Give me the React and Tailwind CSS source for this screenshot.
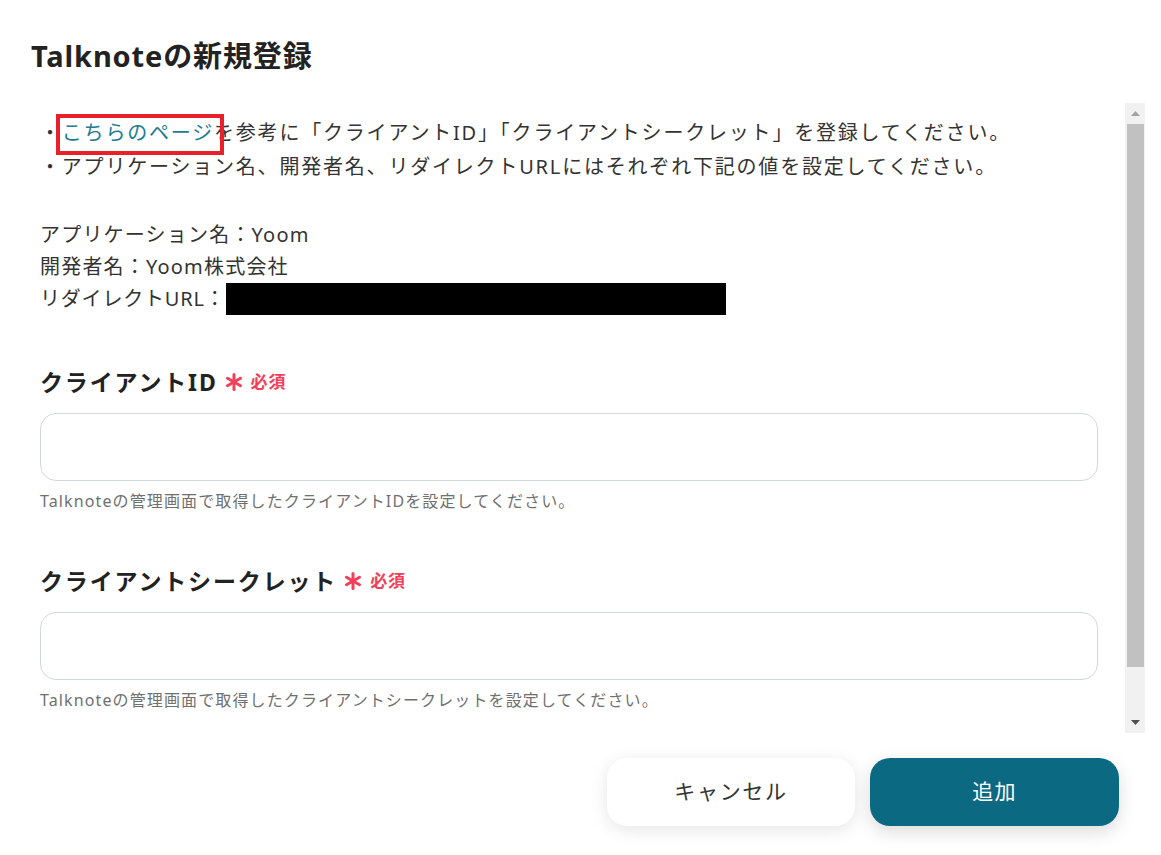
import React from 'react';

// Fake classic scrollbar, drawn to match the reference
const ScrollBar = () => (
    <div className="w-[20px] shrink-0 bg-[#f1f1f1] flex flex-col items-center">
        <div className="h-[21px] w-full flex items-center justify-center">
            <svg width="9" height="5" viewBox="0 0 9 5"><path d="M4.5 0 L9 5 L0 5 Z" fill="#a3a3a3" /></svg>
        </div>
        <div className="w-[17px] h-[543px] bg-[#c1c1c1]" />
        <div className="flex-1" />
        <div className="h-[22px] w-full flex items-center justify-center">
            <svg width="9" height="5" viewBox="0 0 9 5"><path d="M0 0 L9 0 L4.5 5 Z" fill="#505050" /></svg>
        </div>
    </div>
);

const Required = () => (
    <span className="inline-flex items-center ml-[7px] text-[#f2405a]">
        <svg width="18" height="18" viewBox="0 0 18 18" className="mr-[8px]">
            <g stroke="#f2405a" strokeWidth="3" strokeLinecap="round">
                <line x1="9" y1="1.5" x2="9" y2="16.5" />
                <line x1="2.5" y1="5.25" x2="15.5" y2="12.75" />
                <line x1="2.5" y1="12.75" x2="15.5" y2="5.25" />
            </g>
        </svg>
        <span className="text-[17px] font-bold tracking-[0.05em]">必須</span>
    </span>
);

const Field = ({ label, help }) => (
    <div>
        <div className="flex items-center h-[32px] text-[23px] font-bold tracking-[0.08em] text-[#222]">
            {label}
            <Required />
        </div>
        <div className="mt-[15px] h-[68px] rounded-2xl border border-[#d3d7de] bg-white" />
        <p className="mt-[10px] h-[20px] leading-[20px] text-[16px] tracking-[0.07em] text-[#707070]">{help}</p>
    </div>
);

export default function App() {
    return (
        <div className="w-full h-[855px] bg-white flex flex-col font-['Noto_Sans','Noto_Sans_CJK_JP',sans-serif] text-[#333]">
            {/* Title */}
            <h1 className="pl-[31px] pt-[36px] h-[103px] text-[29px] leading-[40px] font-bold tracking-[0.03em] text-[#222]">
                Talknoteの新規登録
            </h1>

            {/* Scrollable body */}
            <div className="flex h-[630px]">
                <div className="flex-1 pl-[40px] pr-[27px] pt-[13px]">
                    <div className="text-[20px] leading-[34px] tracking-[0.09em]">
                        <p>
                            ・
                            <span className="relative text-[#1b7b93]">
                                こちらのページ
                                <span className="absolute -left-[6px] -right-[10px] -top-[5px] -bottom-[9px] border-[4px] border-[#e8202a]" />
                            </span>
                            を参考に「クライアントID」「クライアントシークレット」を登録してください。
                        </p>
                        <p>・アプリケーション名、開発者名、リダイレクトURLにはそれぞれ下記の値を設定してください。</p>
                    </div>

                    <div className="mt-[35px] text-[20px] leading-[32px] tracking-[0.06em]">
                        <p>アプリケーション名：Yoom</p>
                        <p>開発者名：Yoom株式会社</p>
                        <p className="flex items-center tracking-[0.04em]">
                            リダイレクトURL：
                            <span className="inline-block w-[500px] h-[32px] bg-black" />
                        </p>
                    </div>

                    <div className="mt-[51px]">
                        <Field label="クライアントID" help="Talknoteの管理画面で取得したクライアントIDを設定してください。" />
                    </div>
                    <div className="mt-[54px]">
                        <Field label="クライアントシークレット" help="Talknoteの管理画面で取得したクライアントシークレットを設定してください。" />
                    </div>
                </div>
                <div className="pr-[16px] flex">
                    <ScrollBar />
                </div>
            </div>

            {/* Footer buttons */}
            <div className="flex justify-end gap-[15px] pr-[42px] pt-[25px]">
                <button className="w-[248px] h-[68px] rounded-[20px] bg-white shadow-[0_4px_18px_rgba(0,0,0,0.10)] text-[21px] tracking-[0.08em] text-[#333]">
                    キャンセル
                </button>
                <button className="w-[249px] h-[68px] rounded-[20px] bg-[#0b6982] shadow-[0_6px_18px_rgba(0,0,0,0.14)] text-[21px] tracking-[0.06em] text-white">
                    追加
                </button>
            </div>
        </div>
    );
}
